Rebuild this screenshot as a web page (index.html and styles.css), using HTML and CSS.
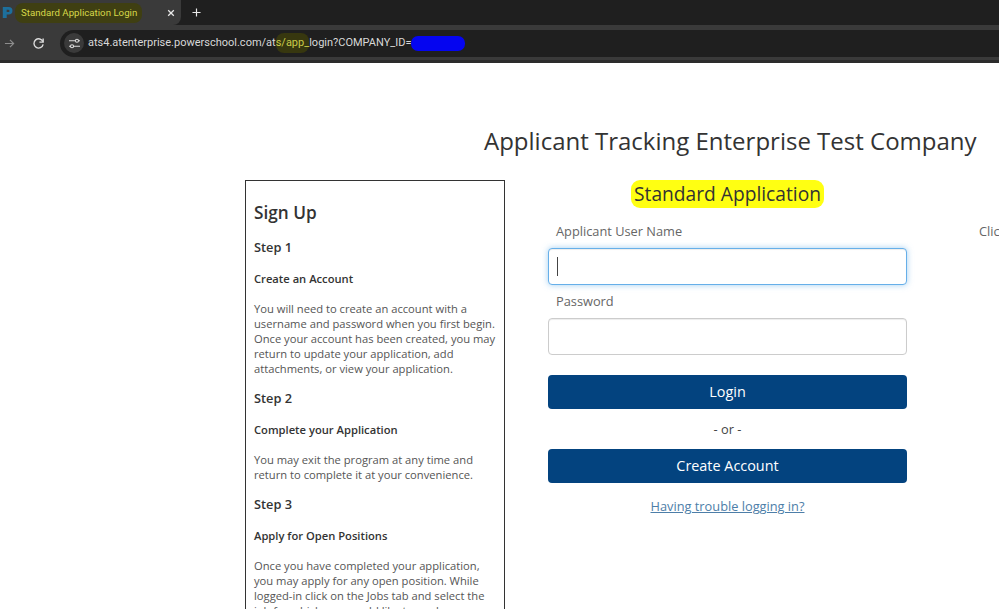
FILE: index.html
```html
<!DOCTYPE html>
<html lang="en">
<head>
<meta charset="utf-8">
<title>Standard Application Login</title>
<link rel="stylesheet" href="styles.css">
</head>
<body>
<header class="chrome">
  <div class="tabstrip">
    <div class="tab">
      <svg class="favicon" viewBox="0 0 14 16"><path d="M1 1h7.500a4.800 4.800 0 0 1 0 9.600H6V15H1z" fill="#1d6f9c"/><path d="M6 4.500h2a1.500 1.500 0 0 1 0 3H6z" fill="#3b3b3b"/></svg>
      <span class="tab-title">Standard Application Login</span>
      <svg class="tab-close" viewBox="0 0 10 10"><path d="M1.500 1.500l7 7M8.500 1.500l-7 7"/></svg>
    </div>
    <svg class="new-tab" viewBox="0 0 10 10"><path d="M5 .5v9M.5 5h9"/></svg>
  </div>
  <div class="toolbar">
    <svg class="nav-fwd" viewBox="0 0 12 12"><path d="M1 6h9.500M6.500 2l4 4-4 4"/></svg>
    <svg class="nav-reload" viewBox="0 0 14 14"><path d="M11.800 5.200A5 5 0 1 0 12 8"/><path d="M12 1.500v4H8" /></svg>
    <div class="omnibox">
      <span class="site-icon"><svg viewBox="0 0 14 12"><path d="M1 3h7M11.500 3H13M1 9h1.500M6 9h7"/><circle cx="9.700" cy="3" r="1.700"/><circle cx="4.300" cy="9" r="1.700"/></svg></span>
      <span class="url">ats4.atenterprise.powerschool.com/at<span class="url-mark">s/app_</span>login?COMPANY_ID=<span class="url-redact"></span></span>
    </div>
  </div>
  <div class="chrome-edge"></div>
</header>
<main class="page">
  <h1 class="company">Applicant Tracking Enterprise Test Company</h1>
  <div class="columns">
    <aside class="signup">
      <h2>Sign Up</h2>
      <h3>Step 1</h3>
      <h4>Create an Account</h4>
      <p>You will need to create an account with a username and password when you first begin. Once your account has been created, you may return to update your application, add attachments, or view your application.</p>
      <h3>Step 2</h3>
      <h4>Complete your Application</h4>
      <p>You may exit the program at any time and return to complete it at your convenience.</p>
      <h3>Step 3</h3>
      <h4>Apply for Open Positions</h4>
      <p>Once you have completed your application, you may apply for any open position. While logged-in click on the Jobs tab and select the job for which you would like to apply.</p>
    </aside>
    <form class="login">
      <h2 class="login-title"><mark>Standard Application</mark></h2>
      <label class="field-label" for="user">Applicant User Name</label>
      <div class="input focused" id="user"><span class="caret"></span></div>
      <label class="field-label pw" for="pass">Password</label>
      <div class="input" id="pass"></div>
      <div class="btn btn-login">Login</div>
      <div class="or">- or -</div>
      <div class="btn btn-create">Create Account</div>
      <a class="trouble" href="#">Having trouble logging in?</a>
    </form>
    <div class="side-note">Click</div>
  </div>
</main>
</body>
</html>
```

FILE: styles.css
```css
* { box-sizing: border-box; }
html, body { margin: 0; height: 100%; overflow: hidden; background: #fff; }
body { font-family: "Open Sans", "Liberation Sans", sans-serif; color: #333; width: 999px; height: 609px; }

.chrome { height: 63px; background: #3a3a3a; font-family: "Roboto", "Liberation Sans", sans-serif; }
.tabstrip { height: 25px; background: #1f1f1f; display: flex; align-items: center; }
.tab { width: 181px; height: 25px; background: #3a3a3a; border-radius: 0 0 8px 0; display: flex; align-items: center; padding-left: 2px; }
.favicon { width: 11px; height: 15px; flex: none; }
.tab-title { margin-left: 2px; padding: 3px 4px 3px 6px; font-size: 9.700px; line-height: 14px; color: #d6d84a; background: #3f3f12; border-radius: 8px; white-space: nowrap; flex: none; width: 127px; }
.tab-close { width: 8px; height: 8px; margin-left: 25px; fill: none; stroke: #e8e8e8; stroke-width: 1.6; }
.new-tab { width: 9px; height: 9px; margin-left: 11px; fill: none; stroke: #e8e8e8; stroke-width: 1.3; }

.toolbar { height: 35px; display: flex; align-items: center; padding-top: 1px; }
.nav-fwd { width: 11px; height: 11px; margin-left: 4px; fill: none; stroke: #8d8d8d; stroke-width: 1.300; }
.nav-reload { width: 13px; height: 13px; margin-left: 17px; fill: none; stroke: #dcdcdc; stroke-width: 1.500; }
.omnibox { margin-left: 15px; width: 939px; height: 27px; border-radius: 14px 0 0 14px; background: #1f1f1f; display: flex; align-items: center; padding-left: 4px; }
.site-icon { width: 20px; height: 20px; border-radius: 50%; background: #3a3a3a; display: flex; align-items: center; justify-content: center; }
.site-icon svg { width: 13px; height: 11px; fill: none; stroke: #dcdcdc; stroke-width: 1.200; }
.url { margin-left: 4px; font-size: 11px; line-height: 20px; color: #d8d8d8; white-space: nowrap; display: flex; align-items: center; }
.url-mark { color: #c9cb4a; background: #37370f; border-radius: 8px; padding: 3px 0; line-height: 14px; }
.url-redact { width: 54px; height: 15px; background: #0505f0; border-radius: 7px; }
.chrome-edge { height: 3px; background: #2c2c2c; }

.page { padding-top: 62px; }
.company { margin: 0; padding-left: 484px; font-size: 24px; font-weight: 400; line-height: 32px; color: #333; white-space: nowrap; }
.columns { display: flex; align-items: flex-start; margin-top: 23px; padding-left: 245px; }

.signup { flex: none; width: 260px; height: 480px; border: 1px solid #333; padding: 22px 8px 0; overflow: hidden; font-size: 11.200px; line-height: 15px; color: #555; }
.signup h2 { margin: 0; font-size: 17.200px; line-height: 20px; font-weight: 600; color: #333; }
.signup h3 { margin: 14px 0 0; font-size: 12.800px; line-height: 20px; font-weight: 600; color: #333; }
.signup h4 { margin: 14px 0 0; font-size: 11.200px; line-height: 15px; font-weight: 600; color: #333; }
.signup p { margin: 15px 0 0; }
.signup p + h3 { margin-top: 12px; }

.login { flex: none; width: 359px; margin-left: 43px; display: flex; flex-direction: column; }
.login-title { margin: 0; height: 27px; text-align: center; font-size: 19.200px; line-height: 27px; font-weight: 400; }
.login-title mark { background: #ffff12; color: #333; padding: 0 3px 1px; border-radius: 9px; }
.field-label { margin: 14px 0 0 8px; height: 20px; font-size: 12.800px; line-height: 20px; color: #666; }
.field-label.pw { margin-top: 6px; }
.input { height: 37px; margin-top: 7px; border: 1px solid #ccc; border-radius: 4px; background: #fff; box-shadow: inset 0 1px 1px rgba(0,0,0,.075); display: flex; align-items: center; padding-left: 8px; }
.input.focused { border-color: #66afe9; box-shadow: inset 0 1px 1px rgba(0,0,0,.075), 0 0 6px rgba(102,175,233,.6); }
.caret { width: 1px; height: 19px; background: #444; }
.btn { height: 34px; background: #03437f; color: #fff; border-radius: 4px; text-align: center; font-size: 14.400px; line-height: 34px; font-weight: 500; }
.btn-login { margin-top: 20px; }
.or { margin-top: 10px; height: 20px; margin-bottom: 10px; text-align: center; font-size: 12.800px; line-height: 20px; color: #444; }
.trouble { margin-top: 13px; text-align: center; font-size: 12.800px; line-height: 20px; color: #4d7ea8; }

.side-note { margin-left: 72px; margin-top: 41px; font-size: 12.800px; line-height: 20px; color: #666; white-space: nowrap; }
```
